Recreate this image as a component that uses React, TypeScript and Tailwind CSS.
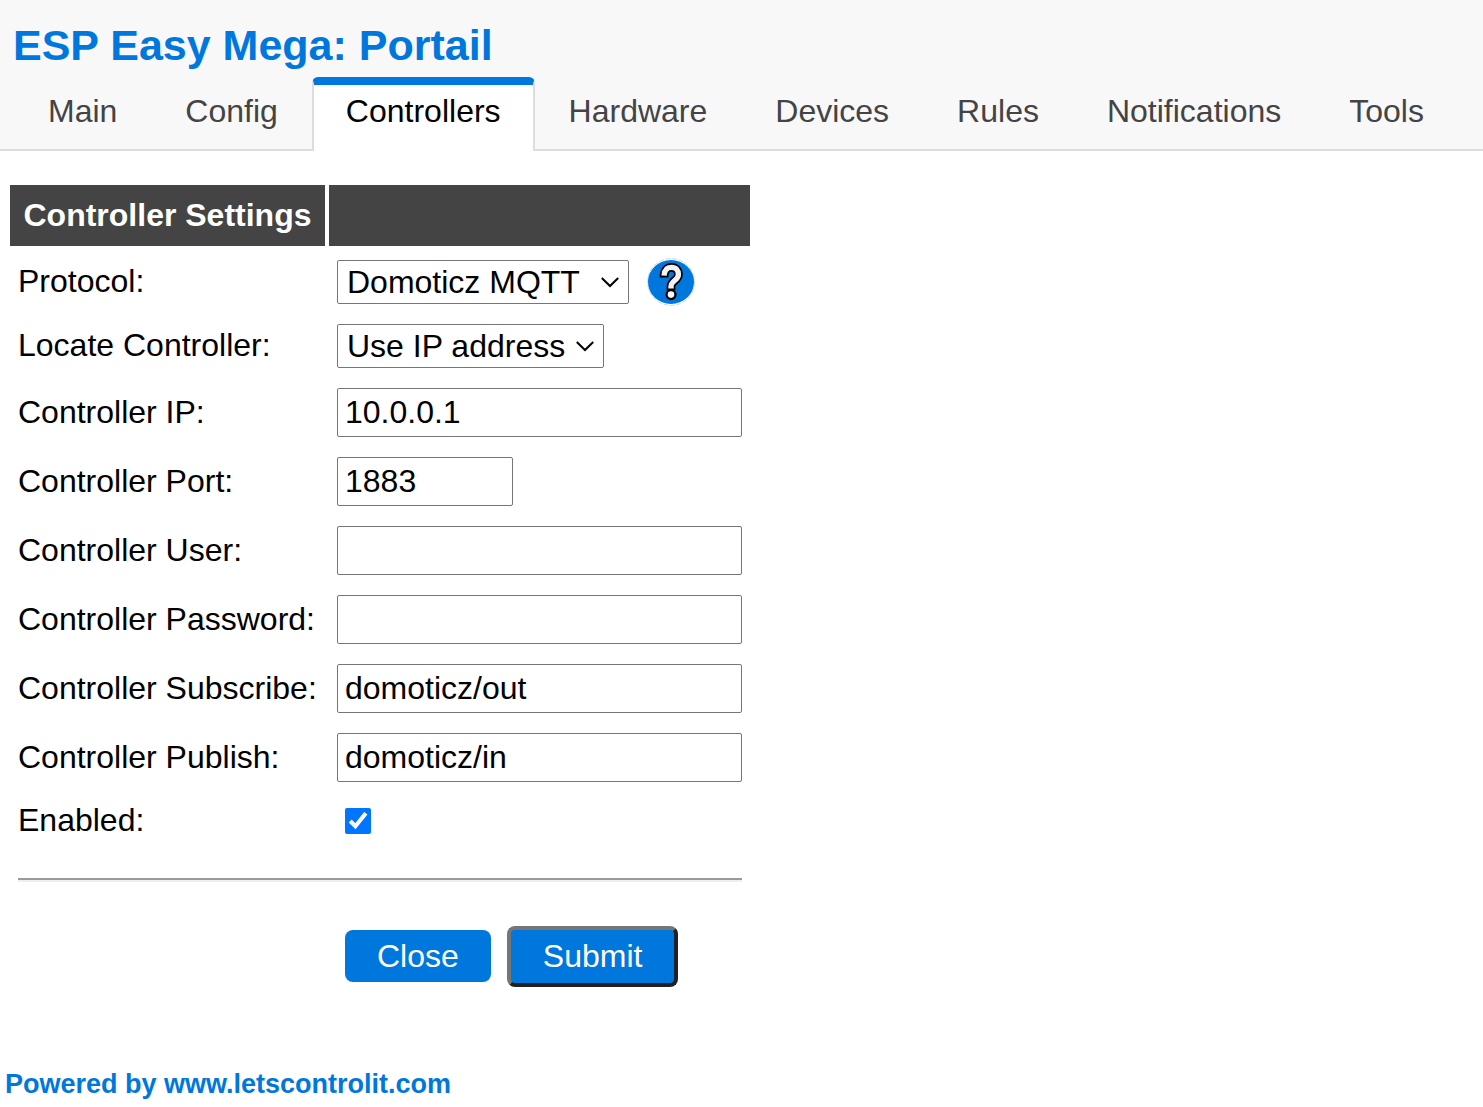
import { useState } from 'react';
import type { ReactNode } from 'react';
import { clsx } from 'clsx';

const tabs = ['Main', 'Config', 'Controllers', 'Hardware', 'Devices', 'Rules', 'Notifications', 'Tools'];

const protocols = ['Domoticz MQTT', 'Domoticz HTTP', 'OpenHAB MQTT'];
const locateOptions = ['Use IP address', 'Use Hostname'];

interface Field {
  id: string;
  label: string;
  type: string;
  value: string;
  short?: boolean;
}

const fields: Field[] = [
  { id: 'ip', label: 'Controller IP:', type: 'text', value: '10.0.0.1' },
  { id: 'port', label: 'Controller Port:', type: 'text', value: '1883', short: true },
  { id: 'user', label: 'Controller User:', type: 'text', value: '' },
  { id: 'password', label: 'Controller Password:', type: 'password', value: '' },
  { id: 'subscribe', label: 'Controller Subscribe:', type: 'text', value: 'domoticz/out' },
  { id: 'publish', label: 'Controller Publish:', type: 'text', value: 'domoticz/in' },
];

const Row = ({ id, label, children }: { id: string; label: string; children: ReactNode }) => (
  <tr>
    <td className="pl-2 pb-0.5 whitespace-nowrap">
      <label htmlFor={id}>{label}</label>
    </td>
    <td className="py-[10px] pr-2 pl-[10px]">{children}</td>
  </tr>
);

const Select = ({ id, options, className }: { id: string; options: string[]; className: string }) => (
  <div className={clsx('relative', className)}>
    <select
      id={id}
      className="block w-full h-11 appearance-none rounded-xs border border-[#767676] bg-white pl-[9px] text-black"
    >
      {options.map((option) => (
        <option key={option}>{option}</option>
      ))}
    </select>
    <svg
      className="pointer-events-none absolute right-[10px] top-[13px] size-[18px]"
      viewBox="0 0 18 18"
      fill="none"
      stroke="#000"
      strokeWidth="2"
    >
      <path d="M0.8 5 L9 13 L17.2 5" />
    </svg>
  </div>
);

const HelpIcon = () => (
  <svg className="size-12" viewBox="0 0 48 48" fill="none">
    <circle cx="24" cy="24" r="23.4" stroke="#b5d7f6" strokeWidth="0.9" strokeDasharray="5 1.5" />
    <ellipse cx="24" cy="24" rx="23" ry="22" fill="#0077dd" />
    <path
      d="M17 19.6 C17 12.6 19.5 9.4 24.4 9.4 C29 9.4 31.4 12.4 31.4 16.4 C31.4 22.4 24 22.6 24 28.4 V32.4"
      stroke="#000"
      strokeWidth="8.8"
    />
    <circle cx="24" cy="36.6" r="5.6" fill="#000" />
    <path
      d="M17.1 17.6 C17.3 12.4 19.6 9.4 24.4 9.4 C29 9.4 31.4 12.4 31.4 16.4 C31.4 22.4 24 22.6 24 28.4 V30.4"
      stroke="#f2f2f2"
      strokeWidth="5.4"
    />
    <circle cx="24" cy="36.6" r="3.3" fill="#fff" />
  </svg>
);

const App = () => {
  const [enabled, setEnabled] = useState(true);

  return (
    <div className="min-h-screen bg-white text-[32px] leading-9 text-black font-['Liberation_Sans',Arial,sans-serif]">
      <header className="border-b-2 border-[#dddddd] bg-[#f8f8f8] pt-[21px] pl-[13px]">
        <h1 className="text-[43px] leading-[48px] font-bold text-[#0077dd]">ESP Easy Mega: Portail</h1>
        <nav className="mt-2 -mb-0.5 flex pl-px">
          {tabs.map((tab) => (
            <a
              key={tab}
              href={`#${tab.toLowerCase()}`}
              className={clsx(
                'rounded-t-md border-x-2 border-t-8 px-8 pt-2 pb-[22px]',
                tab === 'Controllers'
                  ? 'border-x-[#dddddd] border-t-[#0077dd] bg-white text-black'
                  : 'border-transparent text-[#444444]'
              )}
            >
              {tab}
            </a>
          ))}
        </nav>
      </header>

      <main className="pt-[34px] pl-[10px]">
        <form onSubmit={(e) => e.preventDefault()}>
          <table className="w-full max-w-[740px] table-fixed">
            <thead>
              <tr className="border-b-4 border-white">
                <th className="w-[317px] border-r-4 border-white bg-[#444444] px-2 py-3 leading-[37px] font-bold whitespace-nowrap text-white">
                  Controller Settings
                </th>
                <th className="bg-[#444444]" />
              </tr>
            </thead>
            <tbody>
              <Row id="protocol" label="Protocol:">
                <div className="flex h-11 items-center gap-[18px]">
                  <Select id="protocol" options={protocols} className="w-[292px]" />
                  <a href="#help" aria-label="Help">
                    <HelpIcon />
                  </a>
                </div>
              </Row>
              <Row id="locate" label="Locate Controller:">
                <Select id="locate" options={locateOptions} className="w-[267px]" />
              </Row>
              {fields.map((field) => (
                <Row key={field.id} id={field.id} label={field.label}>
                  <input
                    id={field.id}
                    type={field.type}
                    defaultValue={field.value}
                    className={clsx(
                      'block h-[49px] rounded-xs border border-[#767676] bg-white px-[7px]',
                      field.short ? 'w-44' : 'w-full'
                    )}
                  />
                </Row>
              ))}
              <Row id="enabled" label="Enabled:">
                <input
                  id="enabled"
                  type="checkbox"
                  checked={enabled}
                  onChange={(e) => setEnabled(e.target.checked)}
                  className="my-1.5 ml-2 block size-[26px] accent-[#0075ff]"
                />
              </Row>
              <tr>
                <td colSpan={2} className="px-2 pt-7 pb-[34px]">
                  <hr className="h-1 border-t-2 border-b-2 border-t-[#9a9a9a] border-b-[#eeeeee]" />
                </td>
              </tr>
              <tr>
                <td />
                <td className="py-[10px] pl-[18px]">
                  <div className="flex items-start gap-4">
                    <button type="button" className="my-1 rounded-lg bg-[#0077dd] px-8 py-2 text-white">
                      Close
                    </button>
                    <button
                      type="submit"
                      className="h-[61px] rounded-lg border-4 border-t-[#767676] border-r-[#212121] border-b-[#212121] border-l-[#767676] bg-[#0077dd] px-8 pb-px text-white"
                    >
                      Submit
                    </button>
                  </div>
                </td>
              </tr>
            </tbody>
          </table>
        </form>
      </main>

      <footer className="pt-[71px] pb-1 pl-[5px] text-[27px] leading-8 font-bold">
        <a href="#letscontrolit" className="text-[#0077dd]">
          Powered by www.letscontrolit.com
        </a>
      </footer>
    </div>
  );
};

export default App;
